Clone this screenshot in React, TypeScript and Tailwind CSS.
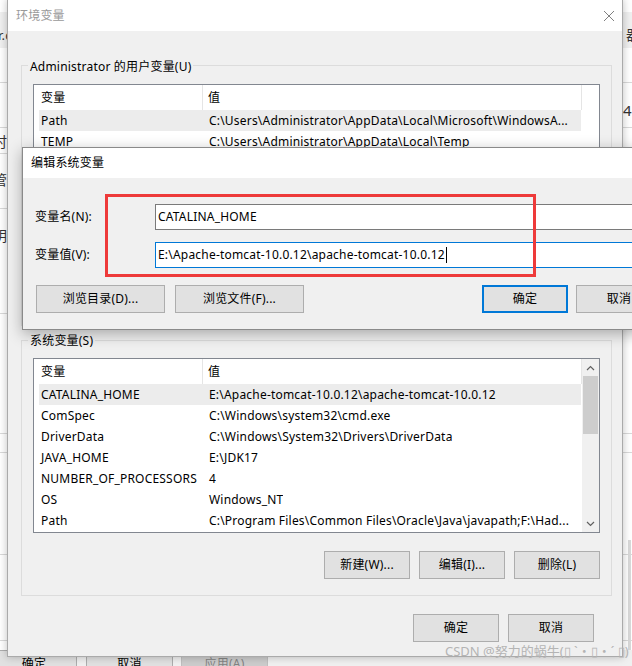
import React from "react"

type Row = [string, string]

const userRows: Row[] = [
  ["Path", "C:\\Users\\Administrator\\AppData\\Local\\Microsoft\\WindowsA..."],
  ["TEMP", "C:\\Users\\Administrator\\AppData\\Local\\Temp"],
  ["TMP", "C:\\Users\\Administrator\\AppData\\Local\\Temp"],
]

const sysRows: Row[] = [
  ["CATALINA_HOME", "E:\\Apache-tomcat-10.0.12\\apache-tomcat-10.0.12"],
  ["ComSpec", "C:\\Windows\\system32\\cmd.exe"],
  ["DriverData", "C:\\Windows\\System32\\Drivers\\DriverData"],
  ["JAVA_HOME", "E:\\JDK17"],
  ["NUMBER_OF_PROCESSORS", "4"],
  ["OS", "Windows_NT"],
  ["Path", "C:\\Program Files\\Common Files\\Oracle\\Java\\javapath;F:\\Had..."],
]

const Button = ({ label, w, primary }: { label: string; w: string; primary?: boolean }) => (
  <div
    className={`flex h-[28px] shrink-0 items-center justify-center bg-[#e1e1e1] ${w} ${
      primary ? "border-2 border-[#0078d7]" : "border border-[#adadad]"
    }`}
  >
    {label}
  </div>
)

const Chevron = ({ down }: { down?: boolean }) => (
  <svg width="9" height="6" viewBox="0 0 9 6">
    <path d={down ? "M1 1L4.5 4.5L8 1" : "M1 5L4.5 1.5L8 5"} fill="none" stroke="#606060" strokeWidth="1.2" />
  </svg>
)

const ScrollBar = () => (
  <div className="flex w-[17px] shrink-0 flex-col bg-[#f0f0f0]">
    <div className="flex h-[17px] items-center justify-center">
      <Chevron />
    </div>
    <div className="mx-[1px] h-[58px] bg-[#cdcdcd]" />
    <div className="flex-1" />
    <div className="flex h-[17px] items-center justify-center">
      <Chevron down />
    </div>
  </div>
)

const ListView = ({ rows, scroll }: { rows: Row[]; scroll?: boolean }) => (
  <div className="flex h-[175px] shrink-0 border border-[#828790] bg-white">
    <div className="flex w-[548px] shrink-0 flex-col overflow-hidden">
      <div className="flex h-[25px] shrink-0">
        <div className="flex w-[169px] items-center border-r border-[#e5e5e5] pl-[7px]">变量</div>
        <div className="flex w-[379px] items-center border-r border-[#e5e5e5] pl-[5px]">值</div>
      </div>
      {rows.map(([name, value], i) => (
        <div
          key={name + i}
          className={`ml-[5px] flex h-[21px] w-[542px] shrink-0 items-center ${i === 0 ? "bg-[#ececec]" : ""}`}
        >
          <span className="w-[164px] shrink-0 overflow-hidden whitespace-nowrap pl-[2px]">{name}</span>
          <span className="overflow-hidden whitespace-nowrap pl-[6px]">{value}</span>
        </div>
      ))}
    </div>
    {scroll && <ScrollBar />}
  </div>
)

const GroupBox = ({
  label,
  labelTop,
  className,
  children,
}: {
  label: string
  labelTop: string
  className: string
  children: React.ReactNode
}) => (
  <div className={`relative ml-[13px] mr-[10px] flex shrink-0 flex-col border border-[#dcdcdc] px-[11px] ${className}`}>
    <span className={`absolute left-[6px] bg-[#f0f0f0] px-[2px] leading-[16px] ${labelTop}`}>{label}</span>
    {children}
  </div>
)

const Backdrop = () => (
  <div className="absolute inset-0 bg-white text-[#333]">
    <div className="absolute left-0 right-0 top-[12px] h-[36px] bg-[#f0f0f0]" />
    <span className="absolute left-[-2px] top-[26px] text-[13px]">r.c</span>
    {[82, 127, 153, 208, 313, 433, 452, 554, 640].map((y) => (
      <div key={y} className="absolute left-0 right-0 h-[1px] bg-[#d9d9d9]" style={{ top: y }} />
    ))}
    <span className="absolute left-[-7px] top-[131px] text-[14px]">时</span>
    <span className="absolute left-[-7px] top-[169px] text-[14px]">管</span>
    <span className="absolute left-[-7px] top-[225px] text-[14px]">明</span>
    <span className="absolute left-[626px] top-[24px] text-[14px]">器</span>
    <span className="absolute left-[623px] top-[99px] text-[15px]">4.</span>
    <div className="absolute left-[628px] top-[540px] h-[126px] w-[3px] bg-[#d9d9d9]" />
    <div className="absolute left-0 right-0 top-[650px] h-[16px] bg-[#f0f0f0]" />
    <div className="absolute left-[-9px] top-[650px] flex h-[28px] w-[86px] items-center justify-center border border-[#adadad] bg-[#e1e1e1] text-black">
      确定
    </div>
    <div className="absolute left-[86px] top-[650px] flex h-[28px] w-[87px] items-center justify-center border border-[#adadad] bg-[#e1e1e1] text-black">
      取消
    </div>
    <div className="absolute left-[181px] top-[650px] flex h-[28px] w-[87px] items-center justify-center border border-[#bfbfbf] bg-[#cccccc] text-[#838383]">
      应用(A)
    </div>
  </div>
)

export default function App() {
  return (
    <div className="relative h-[666px] w-[632px] overflow-hidden text-[12px] tracking-[0.2px] text-black font-['Noto_Sans','Noto_Sans_CJK_SC',sans-serif]">
      <Backdrop />

      {/* 环境变量 */}
      <div className="absolute left-[7px] top-[-1px] flex h-[658px] w-[616px] flex-col border border-[#aaaaaa] bg-[#f0f0f0] shadow-[0_0_8px_rgba(0,0,0,0.25)]">
        <div className="flex h-[31px] shrink-0 items-center justify-between bg-white px-[8px] text-[#999999]">
          <span>环境变量</span>
          <svg width="10" height="10" viewBox="0 0 10 10">
            <path d="M0 0L10 10M10 0L0 10" stroke="#808080" strokeWidth="1" />
          </svg>
        </div>
        <div className="flex flex-1 flex-col pt-[34px]">
          <GroupBox label="Administrator 的用户变量(U)" labelTop="-top-[7px]" className="h-[261px] pt-[18px]">
            <ListView rows={userRows} />
            <div className="mt-[18px] flex justify-end gap-[9px]">
              <Button label="新建(N)..." w="w-[86px]" />
              <Button label="编辑(E)..." w="w-[86px]" />
              <Button label="删除(D)" w="w-[86px]" />
            </div>
          </GroupBox>
          <GroupBox label="系统变量(S)" labelTop="-top-[8px]" className="mt-[14px] h-[256px] pt-[17px]">
            <ListView rows={sysRows} scroll />
            <div className="mt-[18px] flex justify-end gap-[9px]">
              <Button label="新建(W)..." w="w-[86px]" />
              <Button label="编辑(I)..." w="w-[86px]" />
              <Button label="删除(L)" w="w-[86px]" />
            </div>
          </GroupBox>
          <div className="mt-[18px] flex justify-end gap-[9px] pr-[28px]">
            <Button label="确定" w="w-[86px]" />
            <Button label="取消" w="w-[86px]" />
          </div>
        </div>
      </div>

      {/* 编辑系统变量 */}
      <div className="absolute left-[22px] top-[147px] flex h-[183px] w-[660px] flex-col border border-[#8a8a8a] bg-[#f0f0f0] shadow-[0_4px_14px_rgba(0,0,0,0.3)]">
        <div className="flex h-[30px] shrink-0 items-center bg-white pl-[8px]">编辑系统变量</div>
        <div className="flex flex-col pl-[12px] pr-[19px] pt-[26px]">
          <div className="flex items-center">
            <span className="w-[120px] shrink-0">变量名(N):</span>
            <div className="flex h-[26px] flex-1 items-center border border-[#7a7a7a] bg-white pl-[2px]">
              CATALINA_HOME
            </div>
          </div>
          <div className="mt-[12px] flex items-center">
            <span className="w-[120px] shrink-0">变量值(V):</span>
            <div className="flex h-[26px] flex-1 items-center border border-[#0078d7] bg-white pl-[2px]">
              <span>E:\Apache-tomcat-10.0.12\apache-tomcat-10.0.12</span>
              <span className="ml-[1px] h-[16px] w-[1px] bg-black" />
            </div>
          </div>
          <div className="mt-[17px] flex">
            <div className="ml-[1px] flex gap-[10px]">
              <Button label="浏览目录(D)..." w="w-[129px]" />
              <Button label="浏览文件(F)..." w="w-[129px]" />
            </div>
            <div className="flex-1" />
            <div className="flex gap-[8px]">
              <Button label="确定" w="w-[86px]" primary />
              <Button label="取消" w="w-[86px]" />
            </div>
          </div>
        </div>
      </div>

      {/* annotation */}
      <div className="absolute left-[105px] top-[194px] h-[83px] w-[431px] border-[3px] border-[#ee3a3a]" />

      <span className="absolute left-[445px] top-[643px] whitespace-nowrap text-[13px] leading-[16px] tracking-normal text-[#b4b4b4]">
        CSDN @努力的蜗牛(▯ `・▯・´ ▯)
      </span>
    </div>
  )
}
